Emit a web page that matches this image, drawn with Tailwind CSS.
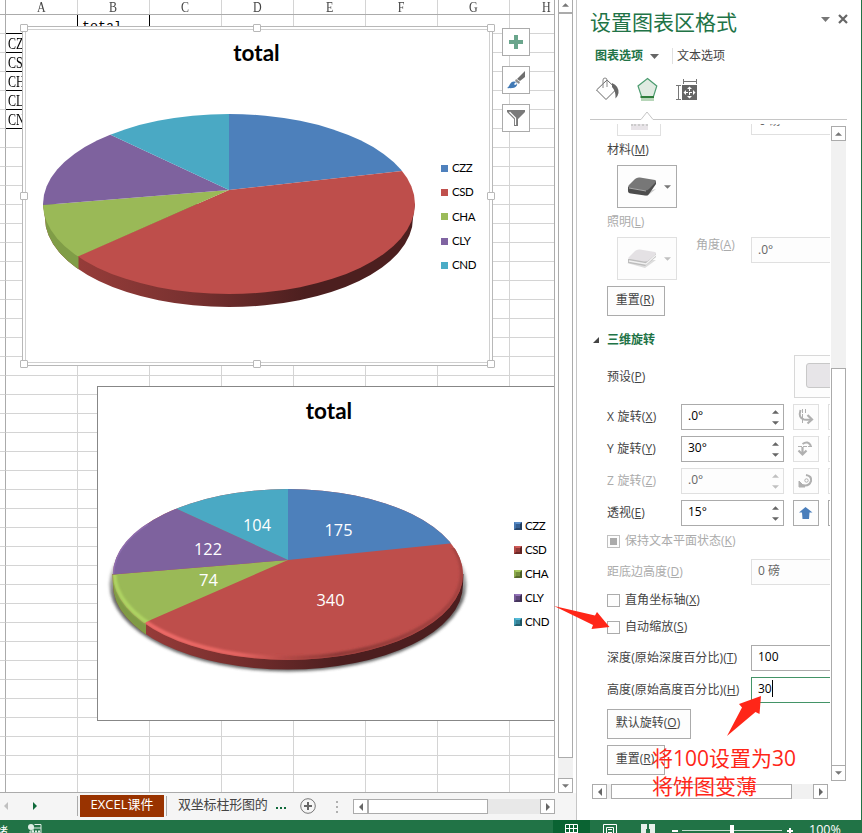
<!DOCTYPE html>
<html lang="zh-CN">
<head>
<meta charset="utf-8">
<title>EXCEL课件</title>
<script src="https://cdn.jsdelivr.net/npm/@tailwindcss/browser@4"></script>
</head>
<body class="w-[862px] h-[833px] overflow-hidden bg-white font-['Open_Sans','Noto_Sans_CJK_SC',sans-serif] text-[12px] text-[#444]">
<svg class="hidden">
  <symbol id="up" viewBox="0 0 8 4"><path d="M0 4L4 0L8 4Z" fill="currentColor"/></symbol>
  <symbol id="down" viewBox="0 0 8 4"><path d="M0 0L4 4L8 0Z" fill="currentColor"/></symbol>
  <symbol id="left" viewBox="0 0 4 8"><path d="M4 0L0 4L4 8Z" fill="currentColor"/></symbol>
  <symbol id="right" viewBox="0 0 4 8"><path d="M0 0L4 4L0 8Z" fill="currentColor"/></symbol>
</svg>
<div class="flex flex-col w-[862px] h-[833px]">
  <div class="flex h-[820px]">
    <!-- worksheet side -->
    <div class="w-[576px] flex flex-col">
      <div class="flex h-[793px]">
        <div class="relative w-[555px] h-[793px] border-r border-b border-[#ababab] overflow-hidden">
          <div class="flex h-[15px] w-[600px] border-b border-[#ababab] font-['Liberation_Serif',serif] text-[15px] leading-[14px] text-center text-[#444]">
            <div class="w-[6px] shrink-0 border-r border-[#ababab]"></div>
            <div class="w-[72px] shrink-0 border-r border-[#d4d4d4]"><span class="inline-block scale-x-[.8]">A</span></div>
            <div class="w-[72px] shrink-0 border-r border-[#d4d4d4]"><span class="inline-block scale-x-[.8]">B</span></div>
            <div class="w-[72px] shrink-0 border-r border-[#d4d4d4]"><span class="inline-block scale-x-[.8]">C</span></div>
            <div class="w-[72px] shrink-0 border-r border-[#d4d4d4]"><span class="inline-block scale-x-[.8]">D</span></div>
            <div class="w-[72px] shrink-0 border-r border-[#d4d4d4]"><span class="inline-block scale-x-[.8]">E</span></div>
            <div class="w-[72px] shrink-0 border-r border-[#d4d4d4]"><span class="inline-block scale-x-[.8]">F</span></div>
            <div class="w-[72px] shrink-0 border-r border-[#d4d4d4]"><span class="inline-block scale-x-[.8]">G</span></div>
            <div class="w-[72px] shrink-0"><span class="inline-block scale-x-[.8]">H</span></div>
          </div>
          <div id="rows" class="w-[600px]"></div>

          <!-- second chart -->
          <div class="absolute left-[97px] top-[386px] w-[464px] h-[335px] border border-[#878787] bg-white flex flex-col">
            <div class="h-[48px] text-center font-['Lato',sans-serif] font-bold text-[22.5px] leading-[47px] text-black">total</div>
            <div class="flex pt-[45px]">
              <svg class="w-[380px] h-[210px] ml-[2px] shrink-0" viewBox="100 480 380 210">
                <defs>
                  <clipPath id="face2"><ellipse cx="288" cy="574.5" rx="175" ry="85.5"/></clipPath>
                  <linearGradient id="side2" gradientUnits="userSpaceOnUse" x1="146" y1="0" x2="340" y2="0"><stop offset="0" stop-color="#963b39"/><stop offset=".5" stop-color="#742e2d"/><stop offset="1" stop-color="#4c1e1f"/></linearGradient>
                  <linearGradient id="rim2" gradientUnits="userSpaceOnUse" x1="146" y1="0" x2="463" y2="0"><stop offset="0" stop-color="#f06c69"/><stop offset=".3" stop-color="#e56562"/><stop offset=".45" stop-color="#b24845"/><stop offset=".6" stop-color="#8e3937"/><stop offset="1" stop-color="#a54341"/></linearGradient>
                  <linearGradient id="fade" gradientUnits="userSpaceOnUse" x1="0" y1="545" x2="0" y2="600"><stop offset="0" stop-color="#000"/><stop offset="1" stop-color="#fff"/></linearGradient>
                  <mask id="shade" maskUnits="userSpaceOnUse" x="100" y="480" width="380" height="210"><rect x="100" y="480" width="380" height="210" fill="url(#fade)"/></mask>
                  <filter id="soft" x="-10%" y="-10%" width="120%" height="120%"><feGaussianBlur stdDeviation="1.8"/></filter>
                  <filter id="soft1"><feGaussianBlur stdDeviation=".9"/></filter>
                  <clipPath id="redrim"><path d="M146 622L146 690H480V548H450L288 560Z"/></clipPath>
                  <clipPath id="greenrim"><path d="M100 575H288L146 622V690H100Z"/></clipPath>
                  <clipPath id="greenside2"><path d="M100 560H146V690H100Z"/></clipPath>
                </defs>
                <g mask="url(#shade)"><ellipse cx="288" cy="584" rx="178.500" ry="87.500" fill="#444" opacity=".8" filter="url(#soft)"/></g>
                <path d="M112.500 574L113 585A175 84.500 0 0 0 463 585L463.500 574Z" fill="url(#side2)"/>
                <path d="M112.500 574L113 585A175 84.500 0 0 0 463 585L463.500 574Z" fill="#7f9a45" clip-path="url(#greenside2)"/>
                <g clip-path="url(#face2)">
                  <rect x="100" y="480" width="380" height="210" fill="#be4e4b"/>
                  <path d="M288 560V470H500V538.200L450 543.500Z" fill="#4d80bb"/>
                  <path d="M288 560L90 576.500V660L146 622Z" fill="#9ab957"/>
                  <path d="M288 560L177 509L90 470V576.500Z" fill="#7e629e"/>
                  <path d="M288 560L177 509L100 470H288Z" fill="#4aa9c4"/>
                  <ellipse cx="288" cy="573" rx="174" ry="85" fill="none" stroke="url(#rim2)" stroke-width="4" clip-path="url(#redrim)" filter="url(#soft1)"/>
                </g>
                <ellipse cx="288" cy="573" rx="173.500" ry="84.500" fill="none" stroke="#b0d664" stroke-width="3.500" clip-path="url(#greenrim)" filter="url(#soft1)"/>
                <path d="M113.500 574Q115 545 148 524" fill="none" stroke="#9474bb" stroke-width="1.500" opacity=".6"/>
                <g fill="white" class="font-['Open_Sans',sans-serif] text-[17px]" text-anchor="middle">
                  <text x="338.500" y="536" textLength="28" lengthAdjust="spacingAndGlyphs">175</text><text x="257" y="531" textLength="28" lengthAdjust="spacingAndGlyphs">104</text><text x="208" y="555" textLength="28" lengthAdjust="spacingAndGlyphs">122</text><text x="208.500" y="586" textLength="19" lengthAdjust="spacingAndGlyphs">74</text><text x="330.500" y="606" textLength="28" lengthAdjust="spacingAndGlyphs">340</text>
                </g>
              </svg>
              <div class="ml-[34px] pt-[34px] shrink-0 font-['Lato',sans-serif] text-[11.5px] tracking-[-.4px] leading-[24px] text-black">
                <div class="flex items-center gap-[3px]"><i class="w-[8px] h-[8px] border-2 border-t-[#5c8fca] border-l-[#4677b0] border-r-[#233d5e] border-b-[#27466c] bg-[#365f92]"></i>CZZ</div>
                <div class="flex items-center gap-[3px]"><i class="w-[8px] h-[8px] border-2 border-t-[#d05c59] border-l-[#b04744] border-r-[#5e2322] border-b-[#6c2827] bg-[#923836]"></i>CSD</div>
                <div class="flex items-center gap-[3px]"><i class="w-[8px] h-[8px] border-2 border-t-[#a9ca60] border-l-[#8ca94d] border-r-[#4c5d27] border-b-[#586a2e] bg-[#748f3d]"></i>CHA</div>
                <div class="flex items-center gap-[3px]"><i class="w-[8px] h-[8px] border-2 border-t-[#9373b8] border-l-[#755a96] border-r-[#3d2e50] border-b-[#46355c] bg-[#5f487c]"></i>CLY</div>
                <div class="flex items-center gap-[3px]"><i class="w-[8px] h-[8px] border-2 border-t-[#55bbd8] border-l-[#419bb4] border-r-[#205461] border-b-[#26606f] bg-[#348297]"></i>CND</div>
              </div>
            </div>
          </div>

          <!-- selected chart -->
          <div class="absolute left-[22px] top-[26px] w-[471px] h-[340px] border border-[#b8b8b8] bg-white p-[2px]">
            <div class="h-full border border-[#d0d0d0] flex flex-col">
              <div class="h-[48px] text-center font-['Lato',sans-serif] font-bold text-[22.5px] leading-[45px] -ml-[2px] text-black">total</div>
              <div class="flex pt-[32px]">
                <svg class="w-[380px] h-[200px] ml-[14px] shrink-0" viewBox="40 110 380 200">
                  <defs>
                    <clipPath id="face1"><ellipse cx="229" cy="204" rx="186" ry="90"/></clipPath>
                    <linearGradient id="side1" gradientUnits="userSpaceOnUse" x1="78" y1="0" x2="305" y2="0"><stop offset="0" stop-color="#963c39"/><stop offset=".5" stop-color="#783130"/><stop offset="1" stop-color="#4c1f1f"/></linearGradient>
                    <clipPath id="greenside1"><path d="M40 190H78.500V310H40Z"/></clipPath>
                  </defs>
                  <path d="M43 204L45 218A184 89 0 0 0 413 218L415 204Z" fill="url(#side1)"/>
                  <path d="M43 204L45 218A184 89 0 0 0 413 218L415 204Z" fill="#809d47" clip-path="url(#greenside1)"/>
                  <g clip-path="url(#face1)">
                    <path d="M229 190V100H430V166.900L402 171Z" fill="#4d80bb"/>
                    <path d="M229 190L402 171L430 167V310H40V285L78 256Z" fill="#be4e4b"/>
                    <path d="M229 190L78 256.500L40 290V205.200Z" fill="#9ab957"/>
                    <path d="M229 190L40 205.300V105H79L111 135Z" fill="#7e629e"/>
                    <path d="M229 190L111 135L75 105H229Z" fill="#4aa9c4"/>
                  </g>
                </svg>
                <div class="ml-[21px] pt-[46px] shrink-0 font-['Lato',sans-serif] text-[11.5px] tracking-[-.4px] leading-[24.3px] text-black">
                  <div class="flex items-center gap-[4px]"><i class="w-[7px] h-[7px] bg-[#4f81bd]"></i>CZZ</div>
                  <div class="flex items-center gap-[4px]"><i class="w-[7px] h-[7px] bg-[#c0504d]"></i>CSD</div>
                  <div class="flex items-center gap-[4px]"><i class="w-[7px] h-[7px] bg-[#9bbb59]"></i>CHA</div>
                  <div class="flex items-center gap-[4px]"><i class="w-[7px] h-[7px] bg-[#8064a2]"></i>CLY</div>
                  <div class="flex items-center gap-[4px]"><i class="w-[7px] h-[7px] bg-[#4bacc6]"></i>CND</div>
                </div>
              </div>
            </div>
            <i class="absolute -left-[3px] -top-[3px] w-[8px] h-[8px] rounded-[1px] border border-[#b8b8b8] bg-white"></i>
            <i class="absolute left-[230px] -top-[3px] w-[8px] h-[8px] rounded-[1px] border border-[#b8b8b8] bg-white"></i>
            <i class="absolute -right-[3px] -top-[3px] w-[8px] h-[8px] rounded-[1px] border border-[#b8b8b8] bg-white"></i>
            <i class="absolute -left-[3px] top-[165px] w-[8px] h-[8px] rounded-[1px] border border-[#b8b8b8] bg-white"></i>
            <i class="absolute -right-[3px] top-[165px] w-[8px] h-[8px] rounded-[1px] border border-[#b8b8b8] bg-white"></i>
            <i class="absolute -left-[3px] -bottom-[3px] w-[8px] h-[8px] rounded-[1px] border border-[#b8b8b8] bg-white"></i>
            <i class="absolute left-[230px] -bottom-[3px] w-[8px] h-[8px] rounded-[1px] border border-[#b8b8b8] bg-white"></i>
            <i class="absolute -right-[3px] -bottom-[3px] w-[8px] h-[8px] rounded-[1px] border border-[#b8b8b8] bg-white"></i>
          </div>

          <!-- chart shortcut buttons -->
          <div class="absolute left-[502px] top-[28px] flex flex-col gap-[10px]">
            <div class="w-[28px] h-[28px] border border-[#ababab] bg-white"><svg class="w-[26px] h-[26px]" viewBox="0 0 26 26"><path d="M11 6h4v5h5v4h-5v5h-4v-5H6v-4h5z" fill="#6aa58c"/></svg></div>
            <div class="w-[28px] h-[28px] border border-[#ababab] bg-white"><svg class="w-[26px] h-[26px]" viewBox="0 0 26 26"><path d="M22 4V10L17 14L14 12Z" fill="#6f6f6f"/><path d="M13 12L17 15L16 17L12 14Z" fill="#8a8a8a"/><path d="M4 21C7 20 6 15 11 14.500C14 14.500 15 17 13.500 19C12 21 9 21.500 4 21Z" fill="#4179b5"/><path d="M11 17L13 15L14 17L12 18Z" fill="#fff"/></svg></div>
            <div class="w-[28px] h-[28px] border border-[#ababab] bg-white"><svg class="w-[26px] h-[26px]" viewBox="0 0 26 26"><path d="M4 5H22V7L15 14V21H11V14L4 7Z" fill="#7a7a7a"/><path d="M6.500 7L12.500 13V20" fill="none" stroke="#fff" stroke-width="1.200"/></svg></div>
          </div>
        </div>
        <!-- vertical scrollbar -->
        <div class="ml-[3px] w-[15px] flex flex-col bg-[#f1f1f1] text-[#777]">
          <div class="h-[13px] border-x border-b border-[#ababab] bg-white flex justify-center pt-[3px]"><svg class="w-[7px] h-[4px]"><use href="#up"/></svg></div>
          <div class="h-[745px] border border-[#ababab] bg-white"></div>
          <div class="mt-auto h-[15px] border border-[#ababab] bg-white flex items-center justify-center"><svg class="w-[7px] h-[4px]"><use href="#down"/></svg></div>
        </div>
      </div>
      <!-- sheet tabs -->
      <div class="h-[27px] bg-[#f5f5f5] flex items-start">
        <svg class="w-[4px] h-[8px] ml-[4px] mt-[9px] text-[#c0c0c0]"><use href="#left"/></svg>
        <svg class="w-[4px] h-[8px] ml-[25px] mt-[9px] text-[#0f6a3a]"><use href="#right"/></svg>
        <div class="w-px h-[20px] ml-[40px] mt-[3px] bg-[#ababab]"></div>
        <div class="ml-[2px] mt-[2px] w-[84px] h-[22px] bg-[#993300] text-white text-center text-[13px] leading-[19px] whitespace-nowrap">EXCEL课件</div>
        <div class="w-px h-[20px] ml-[2px] mt-[3px] bg-[#ababab]"></div>
        <div class="ml-[11px] mt-[2px] w-[90px] text-[13px] leading-[19px] tracking-[-.2px] whitespace-nowrap overflow-hidden">双坐标柱形图的</div>
        <div class="ml-[8px] mt-[14px] flex gap-[2px]"><i class="w-[2px] h-[2px] bg-[#0f6a3a]"></i><i class="w-[2px] h-[2px] bg-[#0f6a3a]"></i><i class="w-[2px] h-[2px] bg-[#0f6a3a]"></i></div>
        <svg class="ml-[14px] mt-[5px] w-[16px] h-[16px]" viewBox="0 0 16 16"><circle cx="8" cy="8" r="7.300" fill="none" stroke="#777"/><path d="M8 4V12M4 8H12" stroke="#666" stroke-width="2"/></svg>
        <div class="ml-[20px] mt-[8px] flex flex-col gap-[3px]"><i class="w-[2px] h-[2px] bg-[#b0b0b0]"></i><i class="w-[2px] h-[2px] bg-[#b0b0b0]"></i><i class="w-[2px] h-[2px] bg-[#b0b0b0]"></i></div>
        <div class="ml-[15px] mt-[6px] w-[202px] h-[15px] bg-[#e8e8e8] flex text-[#666]">
          <div class="w-[15px] border border-[#ababab] bg-white flex items-center justify-center"><svg class="w-[4px] h-[8px]"><use href="#left"/></svg></div>
          <div class="w-[120px] border border-[#ababab] bg-white"></div>
          <div class="ml-auto w-[15px] border border-[#ababab] bg-white flex items-center justify-center"><svg class="w-[4px] h-[8px]"><use href="#right"/></svg></div>
        </div>
      </div>
    </div>

    <!-- format pane -->
    <div class="w-[286px] h-[820px] border-l border-l-[#c6c6c6] border-r border-r-[#217346] bg-white">
      <div class="flex items-start pl-[13px] pt-[7px] h-[44px]">
        <div class="text-[21px] leading-[31px] text-[#217346] w-[231px]">设置图表区格式</div>
        <svg class="w-[9px] h-[5px] mt-[10px] text-[#777]" viewBox="0 0 9 5"><path d="M0 0H9L4.500 5Z" fill="currentColor"/></svg>
        <svg class="w-[10px] h-[10px] ml-[8px] mt-[7px]" viewBox="0 0 10 10"><path d="M1 1L9 9M9 1L1 9" stroke="#666" stroke-width="2.200"/></svg>
      </div>
      <div class="flex items-center pl-[18px] h-[24px]">
        <span class="font-bold text-[#217346]">图表选项</span>
        <svg class="w-[9px] h-[5px] ml-[7px] text-[#666]" viewBox="0 0 9 5"><path d="M0 0H9L4.500 5Z" fill="currentColor"/></svg>
        <div class="w-px h-[16px] ml-[13px] bg-[#e0e0e0]"></div>
        <span class="ml-[4px]">文本选项</span>
      </div>
      <svg class="w-[257px] h-[54px] ml-[13px] block" viewBox="590 68 257 54">
        <path d="M596.500 90L607 80L616.500 89L606 99.500Z" fill="#fff" stroke="#666"/><path d="M603 88V80Q603 78 605 78Q607 78 607 80V87" fill="none" stroke="#888"/><path d="M612 83Q619 86 618.500 93Q618 96 615.500 98.500Q616 91 612 87Z" fill="#666"/>
        <path d="M647.500 78.500L656.800 86L653.500 96.500H641.500L638 86Z" fill="#e0ebe2" stroke="#4c9c70" stroke-width="1.200"/><path d="M640.500 97H654" stroke="#2f7d3c" stroke-width="2"/><path d="M641 99.500H654" stroke="#b7d6b9" stroke-width="3"/>
        <path d="M683.500 79V84M696.500 79V84M683 81.500H697M676 85.500H681M676 99.500H681M678.500 86V99" stroke="#777" fill="none"/><rect x="682" y="85" width="15" height="15" fill="#666"/><path d="M689.500 86.500L692 89H687ZM689.500 98.500L692 96H687ZM683.500 92.500L686 90V95ZM695.500 92.500L693 90V95Z" fill="#fff"/><path d="M689.500 88V97M685 92.500H694" stroke="#fff" stroke-dasharray="3 1"/>
        <path d="M590 119.500H641L647 112L653 119.500H847" fill="none" stroke="#c6c6c6"/>
      </svg>
      <div class="flex pt-[2px]">
        <!-- clipped options viewport -->
        <div class="w-[253px] h-[658px] pl-[30px] overflow-hidden leading-[18px] whitespace-nowrap">
          <div class="flex h-[12px] pl-[10px]">
            <div class="w-[44px] h-[12px] shrink-0 border border-t-0 border-[#e0e0e0] flex justify-center"><i class="w-[17px] h-[6px] bg-[#e8e4e8] border-t-2 border-dotted border-[#ccc]"></i></div>
            <div class="ml-[90px] w-[100px] h-[11px] shrink-0 border-l border-b border-[#e0e0e0] pl-[7px] overflow-hidden text-[#666]"><div class="-mt-[12px]">0 磅</div></div>
          </div>
          <div class="mt-[5px]">材料(<u>M</u>)</div>
          <div class="mt-[6px] ml-[10px] w-[60px] h-[43px] border border-[#ababab] bg-[#fdfdfd] flex items-center">
            <svg class="w-[30px] h-[21px] ml-[9px]" viewBox="0 0 30 21"><path d="M0 13L20 20L29 13L22 15Z" fill="#ccc"/><path d="M1 11L1 15Q1 17 4 17.500L18 19.500Q21 20 22 18L29 8V5Z" fill="#4d4d4d"/><path d="M2 9L8 3Q10 1 13 1.500L28 4Q30 5 28 7L22 13Q20 15 17 14.500L3 12Q0 11 2 9Z" fill="#777"/><path d="M2 12L19 15" stroke="#aaa"/></svg>
            <svg class="w-[7px] h-[4px] ml-[7px] text-[#777]"><use href="#down"/></svg>
          </div>
          <div class="mt-[5px] text-[#ababab]">照明(<u>L</u>)</div>
          <div class="mt-[6px] ml-[10px] h-[43px] flex items-start">
            <div class="w-[60px] h-[43px] shrink-0 border border-[#e0e0e0] bg-[#fdfdfd] flex items-center">
              <svg class="w-[30px] h-[21px] ml-[9px]" viewBox="0 0 30 21"><path d="M0 15L18 20L29 12L20 12Z" fill="#ddd"/><path d="M1 11L1 15L18 18L29 9V5Z" fill="#bdbdbd"/><path d="M2 13L19 16L29 7" stroke="#f1f1f1" fill="none" stroke-width="1.500"/><path d="M2 9L8 3Q10 1 13 1.500L28 4Q30 5 28 7L22 12Q20 14 17 13.500L3 11Q0 11 2 9Z" fill="#e4e1e4"/></svg>
              <svg class="w-[7px] h-[4px] ml-[7px] text-[#c0c0c0]"><use href="#down"/></svg>
            </div>
            <div class="ml-[19px] w-[55px] shrink-0 -mt-px text-[#ababab]">角度(<u>A</u>)</div>
            <div class="w-[100px] h-[26px] shrink-0 border border-[#e0e0e0] bg-[#fdfdfd] pl-[6px] leading-[23px] text-[#666]">.0°</div>
          </div>
          <div class="mt-[6px] w-[58px] h-[30px] border border-[#ababab] bg-[#fdfdfd] text-center leading-[26px] pr-[2px]">重置(<u>R</u>)</div>
          <div class="mt-[15px] -ml-[14px] flex items-center font-bold text-[#217346]"><svg class="w-[6px] h-[6px] mr-[8px]" viewBox="0 0 6 6"><path d="M6 0V6H0Z" fill="#444"/></svg>三维旋转</div>
          <div class="mt-[6px] flex items-center h-[43px]"><span class="w-[187px] shrink-0">预设(<u>P</u>)</span><div class="w-[60px] h-[43px] shrink-0 border border-[#d8d8d8] bg-[#fdfdfd] pl-[11px] pt-[7px]"><div class="w-[40px] h-[25px] rounded-[3px] border border-[#c8c8c8] bg-[#e7e5e8]"></div></div></div>
          <div class="mt-[6px] flex flex-col gap-[6px]">
            <div class="flex items-center h-[26px]"><span class="w-[74px] shrink-0 tracking-[.2px]">X 旋转(<u>X</u>)</span>
              <div class="w-[103px] h-[26px] shrink-0 border border-[#ababab] bg-white pl-[6px] pr-[4px] flex items-center justify-between text-black"><span class="-mt-[3px]">.0°</span><span class="flex flex-col gap-[7px] text-[#666]"><svg class="w-[7px] h-[4px]"><use href="#up"/></svg><svg class="w-[7px] h-[4px]"><use href="#down"/></svg></span></div>
              <div class="ml-[9px] w-[26px] h-[26px] shrink-0 border border-[#e0e0e0] bg-[#fdfdfd]"><svg class="w-[24px] h-[24px]" viewBox="0 0 24 24" fill="none" stroke="#b0b0b0"><path d="M8.500 4V18M11.500 4V9" stroke-dasharray="4 1"/><path d="M6.500 5Q4 13 10 14.500Q14 15 17 14.500" stroke-width="2"/><path d="M13.500 10L18 14.500L13.500 18.500" stroke-width="2.200"/></svg></div><div class="ml-[9px] w-[26px] h-[26px] shrink-0 border border-[#e0e0e0]"></div></div>
            <div class="flex items-center h-[26px]"><span class="w-[74px] shrink-0 tracking-[.2px]">Y 旋转(<u>Y</u>)</span>
              <div class="w-[103px] h-[26px] shrink-0 border border-[#ababab] bg-white pl-[6px] pr-[4px] flex items-center justify-between text-black"><span class="-mt-[3px]">30°</span><span class="flex flex-col gap-[7px] text-[#666]"><svg class="w-[7px] h-[4px]"><use href="#up"/></svg><svg class="w-[7px] h-[4px]"><use href="#down"/></svg></span></div>
              <div class="ml-[9px] w-[26px] h-[26px] shrink-0 border border-[#e0e0e0] bg-[#fdfdfd]"><svg class="w-[24px] h-[24px]" viewBox="0 0 24 24" fill="none" stroke="#b0b0b0"><path d="M4 9.500H19" stroke-dasharray="4 1"/><path d="M8.500 7Q14 3 17 9" stroke-width="2"/><path d="M8.500 10V17.500M4.500 13.500L8.500 17.500L12.500 13.500" stroke-width="2.200"/></svg></div><div class="ml-[9px] w-[26px] h-[26px] shrink-0 border border-[#e0e0e0]"></div></div>
            <div class="flex items-center h-[26px]"><span class="w-[74px] shrink-0 tracking-[.2px] text-[#ababab]">Z 旋转(<u>Z</u>)</span>
              <div class="w-[103px] h-[26px] shrink-0 border border-[#e0e0e0] bg-[#fdfdfd] pl-[6px] pr-[4px] flex items-center justify-between text-[#666]"><span class="-mt-[3px]">.0°</span><span class="flex flex-col gap-[7px] text-[#c0c0c0]"><svg class="w-[7px] h-[4px]"><use href="#up"/></svg><svg class="w-[7px] h-[4px]"><use href="#down"/></svg></span></div>
              <div class="ml-[9px] w-[26px] h-[26px] shrink-0 border border-[#e0e0e0] bg-[#fdfdfd]"><svg class="w-[24px] h-[24px]" viewBox="0 0 24 24" fill="none" stroke="#b0b0b0"><path d="M12 6Q18 7 17 12Q15 18 8 16" stroke-width="2.200"/><circle cx="12.500" cy="11.500" r="1.700"/><path d="M5 12V18H11Z" fill="#b0b0b0"/></svg></div><div class="ml-[9px] w-[26px] h-[26px] shrink-0 border border-[#e0e0e0]"></div></div>
            <div class="flex items-center h-[26px]"><span class="w-[74px] shrink-0">透视(<u>E</u>)</span>
              <div class="w-[103px] h-[26px] shrink-0 border border-[#ababab] bg-white pl-[6px] pr-[4px] flex items-center justify-between text-black"><span class="-mt-[3px]">15°</span><span class="flex flex-col gap-[7px] text-[#666]"><svg class="w-[7px] h-[4px]"><use href="#up"/></svg><svg class="w-[7px] h-[4px]"><use href="#down"/></svg></span></div>
              <div class="ml-[9px] w-[26px] h-[26px] shrink-0 border border-[#ababab] bg-[#fdfdfd]"><svg class="w-[24px] h-[24px]" viewBox="0 0 24 24"><path d="M11.500 6L18.500 11.500H15.500L15 18H8.500L8 11.500H5Z" fill="#4a7ebb"/></svg></div><div class="ml-[9px] w-[26px] h-[26px] shrink-0 border border-[#ababab]"></div></div>
          </div>
          <div class="mt-[6px] flex items-center text-[#ababab]"><i class="w-[13px] h-[13px] border border-[#c0c0c0] bg-[#fdfdfd] p-[2px] mr-[5px]"><i class="block w-[7px] h-[7px] bg-[#ababab]"></i></i>保持文本平面状态(<u>K</u>)</div>
          <div class="mt-[9px] flex items-center"><span class="w-[144px] shrink-0 text-[#ababab]">距底边高度(<u>D</u>)</span><div class="w-[100px] h-[26px] shrink-0 border border-[#e0e0e0] bg-[#fdfdfd] pl-[6px] leading-[22px] text-[#666]">0 磅</div></div>
          <div class="mt-[6px] flex items-center tracking-[.1px]"><i class="w-[13px] h-[13px] border border-[#ababab] bg-[#fdfdfd] mr-[5px]"></i>直角坐标轴(<u>X</u>)</div>
          <div class="mt-[9px] flex items-center tracking-[.1px]"><i class="w-[13px] h-[13px] border border-[#ababab] bg-[#fdfdfd] mr-[5px]"></i>自动缩放(<u>S</u>)</div>
          <div class="mt-[9px] flex items-center"><span class="w-[144px] shrink-0 tracking-[.1px]">深度(原始深度百分比)(<u>T</u>)</span><div class="w-[100px] h-[26px] shrink-0 border border-[#ababab] bg-white pl-[6px] leading-[22px] text-black">100</div></div>
          <div class="mt-[6px] flex items-center"><span class="w-[144px] shrink-0 tracking-[.1px]">高度(原始高度百分比)(<u>H</u>)</span><div class="w-[100px] h-[26px] shrink-0 border border-[#439467] bg-white pl-[6px] leading-[22px] text-black flex">30<i class="w-px h-[17px] mt-[2px] bg-black"></i></div></div>
          <div class="mt-[6px] w-[84px] h-[30px] border border-[#ababab] bg-[#fdfdfd] text-center leading-[26px] pr-[2px]">默认旋转(<u>O</u>)</div>
          <div class="mt-[6px] w-[58px] h-[30px] border border-[#ababab] bg-[#fdfdfd] text-center leading-[26px] pr-[2px]">重置(<u>R</u>)</div>
        </div>
        <div class="ml-[1px] mt-[2px] w-[15px] h-[655px] bg-[#f1f1f1] flex flex-col text-[#777]">
          <div class="h-[15px] border border-[#ababab] bg-white flex items-center justify-center"><svg class="w-[7px] h-[4px]"><use href="#up"/></svg></div>
          <div class="mt-[227px] h-[398px] border border-[#ababab] bg-white"></div>
          <div class="h-[15px] border border-t-0 border-[#ababab] bg-white flex items-center justify-center"><svg class="w-[7px] h-[4px]"><use href="#down"/></svg></div>
        </div>
      </div>
      <div class="ml-[15px] mt-[2px] w-[236px] h-[15px] bg-[#f1f1f1] flex text-[#666]">
        <div class="w-[15px] border border-[#ababab] bg-white flex items-center justify-center"><svg class="w-[4px] h-[8px]"><use href="#left"/></svg></div>
        <div class="ml-[4px] w-[181px] border border-[#ababab] bg-white"></div>
        <div class="ml-auto w-[15px] border border-[#ababab] bg-white flex items-center justify-center"><svg class="w-[4px] h-[8px]"><use href="#right"/></svg></div>
      </div>
    </div>
  </div>

  <!-- status bar -->
  <div class="h-[13px] bg-[#217346] flex overflow-hidden text-white">
    <div class="w-[28px] h-[24px] shrink-0"><div class="-ml-[16px] text-[12px] leading-[24px] whitespace-nowrap">就绪</div></div>
    <svg class="w-[14px] h-[13px] shrink-0" viewBox="0 0 14 13"><circle cx="3" cy="7" r="3" fill="#dfeee5"/><path d="M6.500 4.500H13V13H2V11H5V8H13" stroke="#dfeee5" stroke-width="1" fill="none"/><path d="M4 11.500H12" stroke="#dfeee5" stroke-width="2" stroke-dasharray="2 1"/></svg>
    <div class="ml-[511px] w-[37px] h-[13px] shrink-0 bg-[#0a6332]"><svg class="w-[37px] h-[13px]" viewBox="0 0 37 13"><path d="M12.500 13V4.500H24.500V13M16.500 4V13M20.500 4V13M12 8.500H25M12 12.500H25" stroke="#fff" fill="none"/></svg></div>
    <svg class="ml-[13px] w-[53px] h-[13px] shrink-0" viewBox="603 820 53 13"><path d="M603.500 833V824.500H616.500V833M606.500 833V827.500H613.500V833M608 829.500H612M608 832.500H612" stroke="#fff" fill="none"/><path d="M641 824H647V833H641ZM649 824H655V833H649Z" fill="#e7f1eb"/><path d="M646 829H650V833H646Z" fill="#217346"/></svg>
    <svg class="ml-[16px] w-[122px] h-[13px] shrink-0" viewBox="672 820 122 13"><path d="M672 831H678M787 831H793M790 828V833" stroke="#fff" stroke-width="2"/><path d="M682 830.500H782" stroke="#c8ddd1"/><rect x="730" y="825" width="4" height="8" fill="#fff"/></svg>
    <div class="ml-[15px] h-[24px] text-[12.500px] leading-[20px]">100%</div>
  </div>
</div>

<!-- callouts over the window -->
<svg class="absolute left-[550px] top-[595px] w-[220px] h-[145px]" viewBox="550 595 220 145"><path d="M554 606L595 615.500L597 612L609.500 627L591.500 629L593 625Z" fill="#ff2618"/><path d="M761 696L759.500 714L755.500 712L727 736L742 707.500L739 704Z" fill="#ff2618"/></svg>
<div class="absolute left-[652px] top-[744px] text-[21px] leading-[28px] text-[#ff2618] whitespace-nowrap"><div>将100设置为30</div><div>将饼图变薄</div></div>

<script>
  const labels = ['', 'CZZ', 'CSD', 'CHA', 'CLY', 'CND'];
  let html = '';
  for (let r = 0; r < 41; r++) {
    const boxed = r <= 5;
    html += `<div class="flex h-[19px] font-['Liberation_Serif',serif] text-[16px] leading-[20px] text-black">`;
    html += `<div class="w-[6px] shrink-0 border-r border-r-[#ababab] border-b border-b-[#d4d4d4]"></div>`;
    for (let c = 0; c < 8; c++) {
      const right = r === 0 && c < 2 ? 'border-r-black' : 'border-r-[#d4d4d4]';
      const bottom = boxed && c < 2 ? 'border-b-black' : 'border-b-[#d4d4d4]';
      let text = '';
      if (c === 0 && labels[r]) text = `<span class="inline-block origin-left scale-x-[.75]">${labels[r]}</span>`;
      if (c === 1 && r === 0) text = `<span class="font-['Liberation_Mono',monospace] text-[13.3px] pl-[2px]">total</span>`;
      html += `<div class="w-[72px] shrink-0 border-r border-b pl-[2px] overflow-hidden ${right} ${bottom}">${text}</div>`;
    }
    html += '</div>';
  }
  document.getElementById('rows').innerHTML = html;
</script>
</body>
</html>
